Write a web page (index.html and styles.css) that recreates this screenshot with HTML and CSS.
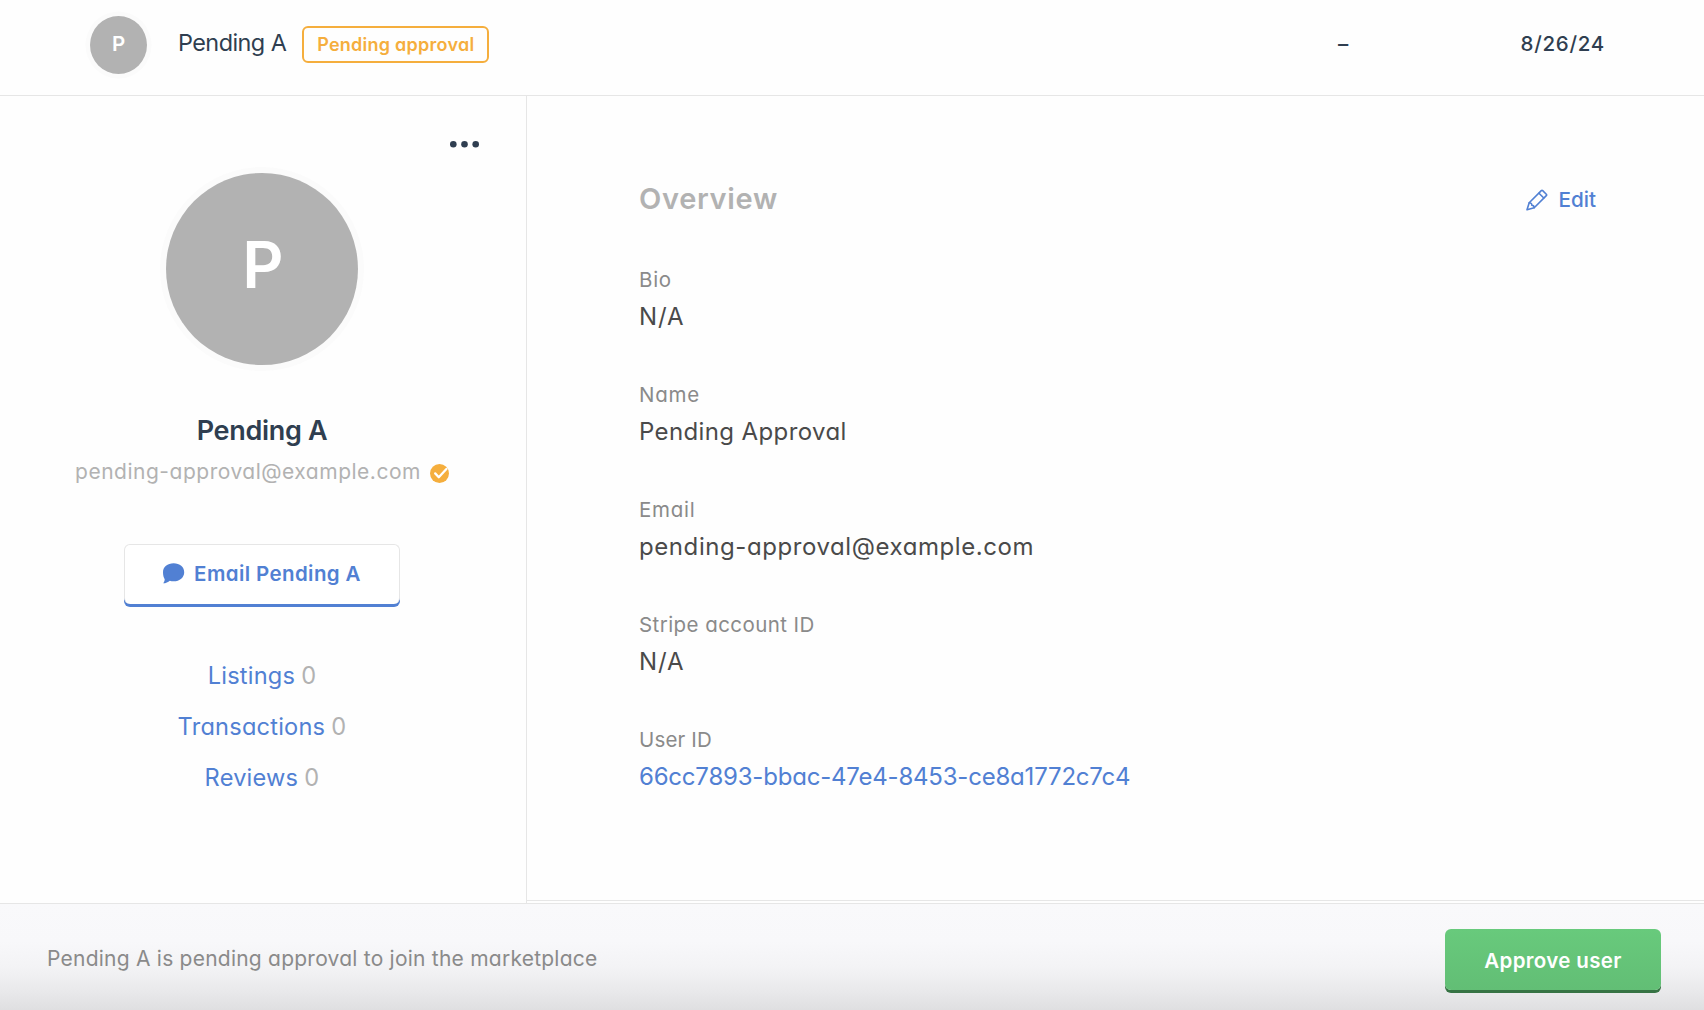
FILE: index.html
```html
<!DOCTYPE html>
<html lang="en">
<head>
<meta charset="utf-8">
<title>Manage users</title>
<link rel="stylesheet" href="styles.css">
</head>
<body>
<div class="page">
  <header class="user-row">
    <div class="avatar avatar-small">P</div>
    <span class="row-name">Pending A</span>
    <span class="badge">Pending approval</span>
    <span class="row-listings">–</span>
    <span class="row-date">8/26/24</span>
  </header>

  <div class="details">
    <aside class="sidebar">
      <button class="more" aria-label="More actions">
        <svg width="30" height="8" viewBox="0 0 30 8" fill="currentColor"><circle cx="3.3" cy="4.200" r="3.3"/><circle cx="14.5" cy="4.200" r="3.3"/><circle cx="25.7" cy="4.200" r="3.3"/></svg>
      </button>
      <div class="avatar avatar-large">P</div>
      <h1 class="name">Pending A</h1>
      <div class="email">
        <span>pending-approval@example.com</span>
        <svg width="19" height="19" viewBox="0 0 19 19"><circle cx="9.5" cy="9.5" r="9.5" fill="#f5ae3d"/><path d="M5.200 9.400l3.600 3.800L16.400 5" fill="none" stroke="#fff" stroke-width="2.3" stroke-linecap="round" stroke-linejoin="round"/></svg>
      </div>
      <button class="email-button">
        <svg width="22" height="21" viewBox="0 0 22 21" fill="currentColor"><path d="M10.600.3C16.800.3 21.200 4 21.200 9.200S16.800 18.300 10.600 18.300c-1.400 0-2.700-.2-3.800-.6C5.200 19.300 2.700 20.200.2 20.300c1-1.200 1.500-2.500 1.500-4C.6 14.500 0 12 0 9.200 0 4 4.500.3 10.600.3z"/></svg>
        <span>Email Pending A</span>
      </button>
      <nav class="links">
        <div><a href="#">Listings</a><span>0</span></div>
        <div><a href="#">Transactions</a><span>0</span></div>
        <div><a href="#">Reviews</a><span>0</span></div>
      </nav>
    </aside>

    <main class="overview">
      <div class="overview-head">
        <h2>Overview</h2>
        <a class="edit" href="#">
          <svg width="22" height="22" viewBox="0 0 22 22" fill="none" stroke="currentColor" stroke-width="1.6" stroke-linejoin="round" stroke-linecap="round"><path d="M1 20.800L3.200 13.800 15.300 1.600q.7-.7 1.400 0l3.600 3.600q.7.700 0 1.400L8.200 18.700z"/><path d="M13 4.200l4.800 4.800M3.200 13.800q2.800.1 2.600 2.500 2.300 0 2.400 2.400"/></svg>
          <span>Edit</span>
        </a>
      </div>
      <dl class="fields">
        <div><dt>Bio</dt><dd class="na">N/A</dd></div>
        <div><dt>Name</dt><dd class="full-name">Pending Approval</dd></div>
        <div><dt>Email</dt><dd>pending-approval@example.com</dd></div>
        <div><dt class="stripe">Stripe account ID</dt><dd class="na">N/A</dd></div>
        <div><dt class="user">User ID</dt><dd class="id"><a href="#">66cc7893-bbac-47e4-8453-ce8a1772c7c4</a></dd></div>
      </dl>
    </main>
  </div>

  <footer class="approval-bar">
    <p>Pending A is pending approval to join the marketplace</p>
    <button class="approve">Approve user</button>
  </footer>
</div>
</body>
</html>
```

FILE: styles.css
```css
* { box-sizing: border-box; margin: 0; padding: 0; }

body {
  background: #fefefe;
  color: #2f3e50;
  font-family: Inter, "Open Sans", sans-serif;
  font-feature-settings: "cv11";
}

a { color: #5180d3; text-decoration: none; }
button { font: inherit; font-feature-settings: inherit; border: 0; background: none; cursor: pointer; }
svg { display: block; flex: none; }

.page { display: flex; flex-direction: column; height: 1010px; overflow: hidden; }

.avatar {
  display: flex;
  justify-content: center;
  flex: none;
  border-radius: 50%;
  background: #b2b2b2;
  color: #fff;
}

/* Table row */
.user-row {
  display: flex;
  align-items: flex-start;
  height: 96px;
  padding: 16px 99px 0 90px;
  border-bottom: 1px solid #e6e6e6;
}
.avatar-small {
  width: 57px;
  height: 58px;
  box-shadow: 0 0 0 4.500px #fbfbfb;
  font-size: 20.500px;
  font-weight: 600;
  line-height: 55px;
}
.row-name {
  margin-left: 31px;
  font-size: 23.400px;
  line-height: 54px;
  letter-spacing: -0.023em;
}
.badge {
  width: 187px;
  height: 37px;
  margin: 10px 0 0 16px;
  border: 2px solid #f5ae3d;
  border-radius: 6px;
  color: #f5ae3d;
  font-size: 18px;
  font-weight: 600;
  line-height: 33px;
  letter-spacing: 0.0143em;
  text-align: center;
}
.row-listings {
  width: 12px;
  margin-left: auto;
  font-size: 20.500px;
  font-weight: 500;
  line-height: 56px;
}
.row-date {
  width: 255px;
  font-size: 20.500px;
  font-weight: 500;
  line-height: 55px;
  letter-spacing: 0.0356em;
  text-align: right;
}

/* Profile column */
.details { display: flex; height: 807px; }
.sidebar {
  display: flex;
  flex-direction: column;
  align-items: center;
  width: 527px;
  padding-right: 2px;
  border-right: 1px solid #e6e6e6;
}
.more {
  align-self: flex-end;
  height: 8px;
  margin: 44px 44px 25px 0;
  color: #2f3e50;
}
.avatar-large {
  width: 192px;
  height: 192px;
  padding-left: 2px;
  box-shadow: 0 0 0 6px #fbfbfb;
  font-size: 64px;
  font-weight: 600;
  line-height: 183px;
}
.name {
  margin-top: 48px;
  font-size: 27px;
  font-weight: 600;
  line-height: 36px;
  letter-spacing: -0.0118em;
}
.email {
  display: flex;
  align-items: center;
  gap: 9px;
  margin-top: 8px;
  color: #b2b2b2;
  font-size: 21px;
  line-height: 30px;
  letter-spacing: 0.0244em;
}
.email svg { margin-top: 3px; }
.email-button {
  display: flex;
  align-items: center;
  justify-content: center;
  gap: 9px;
  width: 276px;
  height: 60px;
  margin-top: 57px;
  padding-bottom: 2px;
  border: 1px solid #e6e6e6;
  border-bottom: 0;
  border-radius: 6px;
  box-shadow: 0 3px 0 #5180d3;
  background: #fff;
  color: #5180d3;
  font-size: 20.500px;
  font-weight: 600;
  letter-spacing: 0.0192em;
}
.links { margin-top: 46px; font-size: 23.600px; letter-spacing: 0.009em; }
.links div { display: flex; justify-content: center; gap: 6px; line-height: 51px; }
.links span { color: #b2b2b2; }

/* Overview panel */
.overview {
  flex: 1;
  height: 805px;
  padding: 80px 108px 0 112px;
  border-bottom: 1px solid #e6e6e6;
}
.overview-head { display: flex; justify-content: space-between; height: 85px; }
.overview h2 {
  color: #b2b2b2;
  font-size: 29px;
  font-weight: 600;
  line-height: 45px;
  letter-spacing: 0.0236em;
}
.edit {
  display: flex;
  align-items: center;
  gap: 10px;
  height: 47px;
  font-size: 20.700px;
  font-weight: 500;
}
.fields { display: flex; flex-direction: column; gap: 41px; }
.fields dt {
  color: #8a8a8a;
  font-size: 20.500px;
  line-height: 37px;
  letter-spacing: 0.036em;
}
.fields dt.stripe { letter-spacing: 0.021em; }
.fields dt.user { letter-spacing: 0.008em; }
.fields dd {
  color: #4a4a4a;
  font-size: 24px;
  line-height: 37px;
  letter-spacing: 0.0241em;
}
.fields dd.na { letter-spacing: 0.0387em; }
.fields dd.full-name { letter-spacing: 0.016em; }
.fields dd.id { letter-spacing: -0.0085em; }

/* Sticky approval bar */
.approval-bar {
  display: flex;
  align-items: flex-start;
  justify-content: space-between;
  height: 107px;
  padding: 25px 43px 0 47px;
  border-top: 1px solid #e6e6e6;
  background: linear-gradient(#f9f9fb 0%, #f8f8fa 35%, #f3f3f5 60%, #e9e9eb 82%, #dfdfe1 100%);
}
.approval-bar p {
  color: #8a8a8a;
  font-size: 21px;
  line-height: 59px;
  letter-spacing: 0.0111em;
}
.approve {
  width: 216px;
  height: 61px;
  padding-top: 2px;
  border-radius: 6px;
  background: linear-gradient(#68ca7c, #62be75);
  box-shadow: 0 3px 0 #367344;
  color: #fff;
  font-size: 20.500px;
  font-weight: 600;
  letter-spacing: 0.017em;
}
```
